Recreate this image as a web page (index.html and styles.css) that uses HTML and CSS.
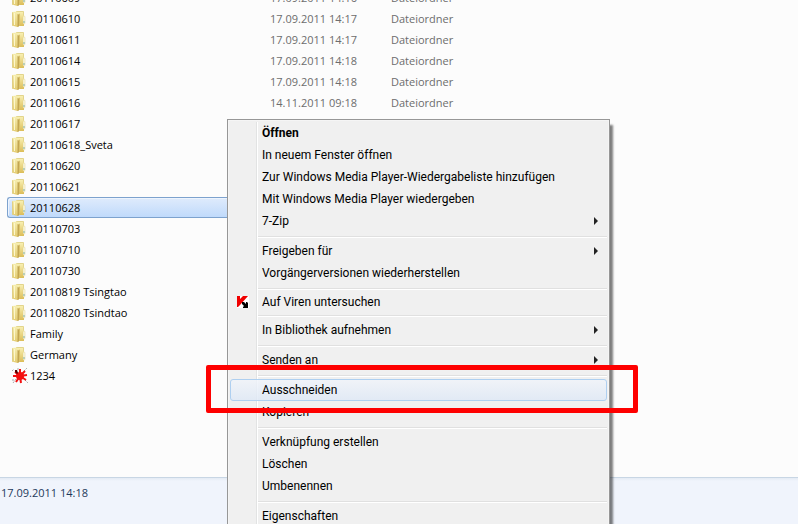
FILE: index.html
```html
<!DOCTYPE html>
<html lang="de">
<head>
  <meta charset="UTF-8">
  <meta name="viewport" content="width=device-width, initial-scale=1.0">
  <title>Explorer</title>
  <link rel="stylesheet" href="styles.css">
</head>
<body>
  <svg class="defs" aria-hidden="true">
    <defs>
      <linearGradient id="front" x1="0" y1="0" x2="0" y2="1">
        <stop offset="0" stop-color="#f6eeb0"/>
        <stop offset="1" stop-color="#e3cb70"/>
      </linearGradient>
      <linearGradient id="back" x1="0" y1="0" x2="0" y2="1">
        <stop offset="0" stop-color="#faf3b8"/>
        <stop offset="1" stop-color="#dcbd58"/>
      </linearGradient>
      <symbol id="folder" viewBox="0 0 14 16">
        <path d="M4 0h7l1 1v14H5z" fill="url(#back)"/>
        <path d="M4 .5h7.500v4" fill="none" stroke="#e2d48c"/>
        <path d="M5 3l2 .5v12L5 16z" fill="#c3a650"/>
        <path d="M7 3l1-.5v12L7 15z" fill="#dac26c"/>
        <path d="M0 1l5-.5.500 1V16L0 14.500z" fill="url(#front)"/>
        <path d="M.5 1.500v13" stroke="#e0cf86"/>
        <path d="M2.500 2v12" stroke="#fcf7cc"/>
        <rect x="11" y="5" width="2" height="8" rx="1" fill="#fbf8df" stroke="#dccb80" stroke-width=".4"/>
        <rect x="11.500" y="10" width="1" height="2" fill="#7fb0a6"/>
      </symbol>
    </defs>
  </svg>

  <main>
    <table class="files">
      <colgroup><col class="name"><col class="date"><col class="type"></colgroup>
      <tbody>
        <tr><td><svg class="icon"><use href="#folder"/></svg>20110609</td><td>17.09.2011 14:16</td><td>Dateiordner</td></tr>
        <tr><td><svg class="icon"><use href="#folder"/></svg>20110610</td><td>17.09.2011 14:17</td><td>Dateiordner</td></tr>
        <tr><td><svg class="icon"><use href="#folder"/></svg>20110611</td><td>17.09.2011 14:17</td><td>Dateiordner</td></tr>
        <tr><td><svg class="icon"><use href="#folder"/></svg>20110614</td><td>17.09.2011 14:18</td><td>Dateiordner</td></tr>
        <tr><td><svg class="icon"><use href="#folder"/></svg>20110615</td><td>17.09.2011 14:18</td><td>Dateiordner</td></tr>
        <tr><td><svg class="icon"><use href="#folder"/></svg>20110616</td><td>14.11.2011 09:18</td><td>Dateiordner</td></tr>
        <tr><td><svg class="icon"><use href="#folder"/></svg>20110617</td><td></td><td></td></tr>
        <tr><td><svg class="icon"><use href="#folder"/></svg>20110618_Sveta</td><td></td><td></td></tr>
        <tr><td><svg class="icon"><use href="#folder"/></svg>20110620</td><td></td><td></td></tr>
        <tr><td><svg class="icon"><use href="#folder"/></svg>20110621</td><td></td><td></td></tr>
        <tr class="selected"><td><svg class="icon"><use href="#folder"/></svg>20110628</td><td></td><td></td></tr>
        <tr><td><svg class="icon"><use href="#folder"/></svg>20110703</td><td></td><td></td></tr>
        <tr><td><svg class="icon"><use href="#folder"/></svg>20110710</td><td></td><td></td></tr>
        <tr><td><svg class="icon"><use href="#folder"/></svg>20110730</td><td></td><td></td></tr>
        <tr><td><svg class="icon"><use href="#folder"/></svg>20110819 Tsingtao</td><td></td><td></td></tr>
        <tr><td><svg class="icon"><use href="#folder"/></svg>20110820 Tsindtao</td><td></td><td></td></tr>
        <tr><td><svg class="icon"><use href="#folder"/></svg>Family</td><td></td><td></td></tr>
        <tr><td><svg class="icon"><use href="#folder"/></svg>Germany</td><td></td><td></td></tr>
        <tr>
          <td>
            <svg class="icon splat" viewBox="0 0 16 16">
              <path d="M0 3l2-2M12 3l3-3M1 15l3-4M13 12l3 3M5 1h2M0 12h2" stroke="#aaa" stroke-dasharray="2 1"/>
              <circle cx="8" cy="8" r="4" fill="#f41010"/>
              <path d="M8 8V1M8 8l5-5M8 8l7-1M8 8l6 4M8 8l1 7M8 8l-4 6M8 8l-7 0M8 8L3 4" stroke="#f41010" stroke-width="2"/>
              <path d="M3 2h2l1 3-1 1-2-2z" fill="#500"/>
            </svg>1234
          </td><td></td><td></td>
        </tr>
      </tbody>
    </table>
  </main>

  <footer>17.09.2011 14:18</footer>

  <ul class="menu">
    <li><button type="button"><b>Öffnen</b></button></li>
    <li><button type="button">In neuem Fenster öffnen</button></li>
    <li><button type="button">Zur Windows Media Player-Wiedergabeliste hinzufügen</button></li>
    <li><button type="button">Mit Windows Media Player wiedergeben</button></li>
    <li><button type="button" class="sub">7-Zip</button></li>
    <li class="line"></li>
    <li><button type="button" class="sub">Freigeben für</button></li>
    <li><button type="button">Vorgängerversionen wiederherstellen</button></li>
    <li class="line"></li>
    <li class="scan">
      <button type="button">
        <svg viewBox="0 0 12 12">
          <path d="M0 0h12v12H0z" fill="#fff"/>
          <path d="M0 0h3v3l3-3h5L3 9l-2 2H0z" fill="#f00000"/>
          <path d="M5 6h2l2 2V6l1 0 1 1v5H6v-1l1-1-2-2z" fill="#000"/>
        </svg>Auf Viren untersuchen
      </button>
    </li>
    <li class="line"></li>
    <li><button type="button" class="sub">In Bibliothek aufnehmen</button></li>
    <li class="line"></li>
    <li><button type="button" class="sub">Senden an</button></li>
    <li class="line"></li>
    <li class="marked"><button type="button" class="active">Ausschneiden</button></li>
    <li><button type="button">Kopieren</button></li>
    <li class="line"></li>
    <li><button type="button">Verknüpfung erstellen</button></li>
    <li><button type="button">Löschen</button></li>
    <li><button type="button">Umbenennen</button></li>
    <li class="line"></li>
    <li><button type="button">Eigenschaften</button></li>
  </ul>
</body>
</html>
```
FILE: styles.css
```css
* {
  box-sizing: border-box;
}
body {
  margin: 0;
  height: 100vh;
  display: flex;
  flex-direction: column;
  position: relative;
  overflow: hidden;
  background: #fcfcfc;
  color: #000;
  font-family: "Open Sans", "Noto Sans", sans-serif;
  font-size: 11px;
}
.defs {
  position: absolute;
  width: 0;
  height: 0;
}
main {
  flex: 1;
  min-height: 0;
  overflow: hidden;
}

/* file list, scrolled so the first row is cut */
.files {
  width: 580px;
  margin: -13px 0 0 7px;
  table-layout: fixed;
  border-collapse: separate;
  border-spacing: 0;
}
.files .name {
  width: 263px;
}
.files .date {
  width: 121px;
}
.files td {
  height: 21px;
  padding: 0;
  line-height: 19px;
  white-space: nowrap;
  color: #6d6d6d;
}
.files td:first-child {
  padding-left: 5px;
  color: #000;
}
.files .selected td {
  background: linear-gradient(#dfebfc, #c0dafb);
  border: solid #7da2ce;
  border-width: 1px 0;
}
.files .selected td:first-child {
  padding-left: 4px;
  border-left-width: 1px;
  border-radius: 3px 0 0 3px;
  box-shadow: inset 1px 1px 0 #edf4fe;
}
.icon {
  width: 14px;
  height: 16px;
  margin-right: 4px;
  vertical-align: -4px;
}
.icon.splat {
  width: 16px;
  margin-right: 2px;
  fill: none;
}

footer {
  height: 47px;
  padding: 7px 1px;
  border-top: 1px solid #c8d6e4;
  background: linear-gradient(#e4ebf4, #f0f4fc 3px);
  color: #1e395b;
  line-height: 16px;
}

/* context menu */
.menu {
  position: absolute;
  left: 227px;
  top: 119px;
  width: 383px;
  margin: 0;
  padding: 2px;
  list-style: none;
  border: 1px solid #979797;
  background: linear-gradient(90deg, #e2e3e3 1px, #fff 1px) 28px 2px / 2px 100% no-repeat #f0f0f0;
  box-shadow: inset 0 0 0 1px #f5f5f5, 4px 5px 2px -1px rgba(0, 0, 0, 0.5);
  font-family: Roboto, "Open Sans", sans-serif;
  font-size: 12px;
}
.menu button {
  display: flex;
  align-items: center;
  width: 100%;
  height: 22px;
  padding: 0 8px 0 31px;
  border: 1px solid transparent;
  border-radius: 3px;
  background: none;
  color: inherit;
  font: inherit;
  text-align: left;
  white-space: nowrap;
}
.menu .scan button {
  height: 19px;
  padding-left: 6px;
}
.scan svg {
  width: 12px;
  height: 12px;
  margin-right: 13px;
}
.menu .sub::after {
  content: "";
  margin-left: auto;
  border: solid transparent;
  border-width: 4px 0 4px 4px;
  border-left-color: #222;
}
.menu .line {
  height: 2px;
  margin: 4px 0 2px 28px;
  border-top: 1px solid #e0e0e0;
  background: #fff;
}
.menu .active {
  border-color: #aecff0;
  background: linear-gradient(rgba(240, 244, 250, 0.8), rgba(222, 232, 246, 0.8));
}

/* red frame round the marked entry */
.marked {
  position: relative;
}
.marked::after {
  content: "";
  position: absolute;
  inset: -14px -31px -12px -24px;
  border: 5px solid #fe0000;
  border-radius: 2px;
  pointer-events: none;
}
```
